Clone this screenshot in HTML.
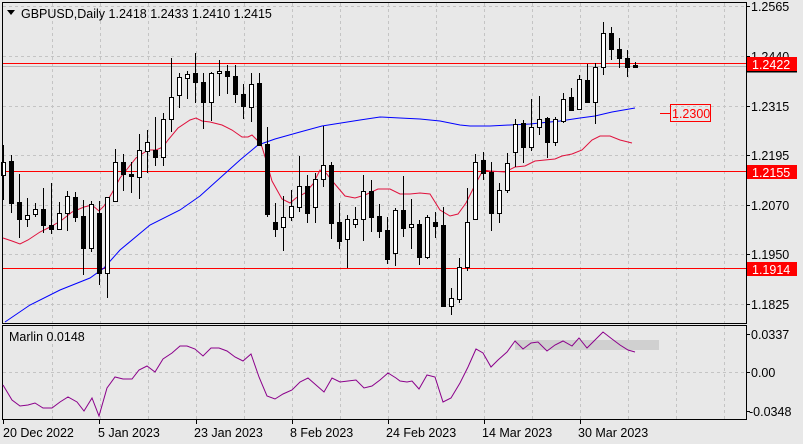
<!DOCTYPE html>
<html><head><meta charset="utf-8"><style>
html,body{margin:0;padding:0;background:#e8e8e8;}
svg{display:block;font-family:"Liberation Sans",sans-serif;}
</style></head><body>
<svg width="803" height="444" viewBox="0 0 803 444" xmlns="http://www.w3.org/2000/svg">
<rect width="803" height="444" fill="#e8e8e8"/>
<g stroke="#c4c4c4" stroke-width="1" stroke-dasharray="3,3" fill="none">
<path d="M52.5 3V323M100.5 3V323M148.5 3V323M196.5 3V323M244.5 3V323M292.5 3V323M340.5 3V323M388.5 3V323M436.5 3V323M484.5 3V323M532.5 3V323M580.5 3V323M628.5 3V323M676.5 3V323M724.5 3V323"/>
<path d="M3 6.5H746M3 56.5H746M3 106.5H746M3 155.5H746M3 205.5H746M3 254.5H746M3 304.5H746"/>
<path d="M52.5 326V419M100.5 326V419M148.5 326V419M196.5 326V419M244.5 326V419M292.5 326V419M340.5 326V419M388.5 326V419M436.5 326V419M484.5 326V419M532.5 326V419M580.5 326V419M628.5 326V419M676.5 326V419M724.5 326V419"/>
<path d="M3 372.5H746"/>
</g>
<line x1="3" y1="66.5" x2="746" y2="66.5" stroke="#b8b8b8"/>
<g stroke="#ff0000" stroke-width="1">
<line x1="3" y1="63.5" x2="746" y2="63.5"/>
<line x1="3" y1="171.5" x2="746" y2="171.5"/>
<line x1="3" y1="268.5" x2="746" y2="268.5"/>
</g>
<polyline fill="none" stroke="#0000ff" stroke-width="1" points="5,322 30,305 60,290 90,278 104,268 120,250 150,225 180,210 200,196 220,178 240,160 258,145 275,139 300,132 322,126 360,120 380,117 400,118 420,119 440,121 460,125 470,126 490,126 510,125 530,124 560,121 580,118 595,116 612,112 635,108"/>
<polyline fill="none" stroke="#e0103c" stroke-width="1" points="3,238 12,241 20,244 28,240 40,232 52,226 62,220 72,212 84,207 92,205 99,211 104,206 112,193 120,178 128,168 136,158 148,150 156,150 163,147 168,140 178,128 190,120 196,118 202,121 210,122 222,125 232,130 242,137 248,137 252,135 258,141 262,147 266,160 272,181 282,199 290,203 296,198 305,193 313,184 320,170 326,173 334,183 345,196 355,198 365,195 378,189 390,189 400,194 410,194 420,193 430,194 440,210 450,216 458,214 466,203 475,185 483,170 490,171 505,172 515,167 525,166 535,161 545,160 555,159 562,156 572,154 582,150 592,140 600,136 610,136 620,140 632,143"/>
<path stroke="#000" stroke-width="1" fill="none" d="M3.5 145V200M11.5 155V213M19.5 174V238M27.5 198V227M35.5 203V217M43.5 188V233M51.5 183V234M59.5 202V230M67.5 191V231M75.5 192V222M83.5 200V275M91.5 201V252M99.5 201V285M107.5 197V298M115.5 149V201M123.5 154V191M131.5 162V193M139.5 134V199M147.5 130V173M155.5 117V166M163.5 113V166M171.5 58V132M179.5 73V108M187.5 71V99M195.5 53V103M203.5 73V129M211.5 72V121M219.5 60V96M227.5 65V94M235.5 65V103M243.5 84V119M251.5 73V122M259.5 73V145M267.5 127V217M275.5 203V237M283.5 196V251M291.5 190V221M299.5 156V212M307.5 175V223M315.5 173V223M323.5 126V187M331.5 162V239M339.5 203V249M347.5 215V268M355.5 207V228M363.5 175V241M371.5 180V232M379.5 204V238M387.5 217V264M395.5 208V266M403.5 176V237M411.5 199V249M419.5 220V265M427.5 215V259M435.5 212V238M443.5 207V307M451.5 288V315M459.5 258V303M467.5 188V271M475.5 154V219M483.5 152V180M491.5 162V231M499.5 183V223M507.5 153V193M515.5 119V167M523.5 120V163M531.5 99V151M539.5 96V135M547.5 117V158M555.5 117V146M563.5 93V123M571.5 88V111M579.5 75V109M587.5 64V102M595.5 63V124M603.5 22V75M611.5 27V60M619.5 38V68M627.5 50V77M635.5 62V68"/>
<g fill="#fff" stroke="#000" stroke-width="1" transform="translate(0.5,0.5)">
<rect x="1" y="162" width="4" height="13"/><rect x="25" y="215" width="4" height="4"/><rect x="33" y="209" width="4" height="5"/><rect x="57" y="213" width="4" height="16"/><rect x="65" y="196" width="4" height="17"/><rect x="89" y="204" width="4" height="44"/><rect x="105" y="197" width="4" height="76"/><rect x="113" y="162" width="4" height="39"/><rect x="137" y="150" width="4" height="27"/><rect x="145" y="142" width="4" height="9"/><rect x="161" y="119" width="4" height="38"/><rect x="169" y="97" width="4" height="22"/><rect x="177" y="77" width="4" height="18"/><rect x="185" y="74" width="4" height="4"/><rect x="209" y="73" width="4" height="29"/><rect x="217" y="71" width="4" height="2"/><rect x="249" y="84" width="4" height="23"/><rect x="281" y="217" width="4" height="10"/><rect x="289" y="206" width="4" height="11"/><rect x="297" y="186" width="4" height="21"/><rect x="313" y="179" width="4" height="28"/><rect x="321" y="165" width="4" height="14"/><rect x="345" y="219" width="4" height="20"/><rect x="353" y="219" width="4" height="5"/><rect x="361" y="191" width="4" height="28"/><rect x="393" y="210" width="4" height="43"/><rect x="409" y="224" width="4" height="3"/><rect x="425" y="217" width="4" height="40"/><rect x="449" y="298" width="4" height="8"/><rect x="457" y="267" width="4" height="32"/><rect x="465" y="222" width="4" height="45"/><rect x="473" y="162" width="4" height="57"/><rect x="497" y="190" width="4" height="23"/><rect x="505" y="163" width="4" height="27"/><rect x="513" y="124" width="4" height="28"/><rect x="529" y="127" width="4" height="20"/><rect x="537" y="119" width="4" height="8"/><rect x="553" y="119" width="4" height="23"/><rect x="561" y="99" width="4" height="22"/><rect x="577" y="79" width="4" height="30"/><rect x="593" y="67" width="4" height="35"/><rect x="601" y="33" width="4" height="34"/>
</g>
<g fill="#000" stroke="#000" stroke-width="1" transform="translate(0.5,0.5)">
<rect x="9" y="161" width="4" height="42"/><rect x="17" y="202" width="4" height="17"/><rect x="41" y="209" width="4" height="16"/><rect x="49" y="225" width="4" height="4"/><rect x="73" y="197" width="4" height="20"/><rect x="81" y="216" width="4" height="32"/><rect x="97" y="213" width="4" height="60"/><rect x="121" y="162" width="4" height="12"/><rect x="129" y="174" width="4" height="2"/><rect x="153" y="150" width="4" height="7"/><rect x="193" y="73" width="4" height="9"/><rect x="201" y="82" width="4" height="20"/><rect x="225" y="71" width="4" height="5"/><rect x="233" y="76" width="4" height="18"/><rect x="241" y="94" width="4" height="12"/><rect x="257" y="83" width="4" height="62"/><rect x="265" y="144" width="4" height="70"/><rect x="273" y="222" width="4" height="7"/><rect x="305" y="186" width="4" height="27"/><rect x="329" y="165" width="4" height="58"/><rect x="337" y="222" width="4" height="19"/><rect x="369" y="191" width="4" height="26"/><rect x="377" y="216" width="4" height="15"/><rect x="385" y="230" width="4" height="29"/><rect x="401" y="210" width="4" height="18"/><rect x="417" y="224" width="4" height="33"/><rect x="433" y="222" width="4" height="4"/><rect x="441" y="225" width="4" height="81"/><rect x="481" y="160" width="4" height="13"/><rect x="489" y="172" width="4" height="41"/><rect x="521" y="123" width="4" height="24"/><rect x="545" y="118" width="4" height="24"/><rect x="569" y="97" width="4" height="13"/><rect x="585" y="80" width="4" height="22"/><rect x="609" y="33" width="4" height="16"/><rect x="617" y="49" width="4" height="9"/><rect x="625" y="58" width="4" height="9"/><rect x="633" y="65" width="4" height="2"/>
</g>
<line x1="660" y1="113.5" x2="670" y2="113.5" stroke="#ff0000"/>
<rect x="670.5" y="104.5" width="40" height="17" fill="none" stroke="#ff0000"/>
<text x="672" y="118" font-size="12.5" fill="#ff0000">1.2300</text>
<rect x="2.5" y="2.5" width="744" height="321" fill="none" stroke="#000"/>
<rect x="2.5" y="325.5" width="744" height="94" fill="none" stroke="#000"/>
<rect x="515" y="340" width="144" height="10" fill="#d0d0d0"/>
<polyline fill="none" stroke="#8b008b" stroke-width="1" points="3,385 12,400 20,406 28,405 35,403 43,408 52,408 60,402 68,397 77,402 84,411 92,398 99,416 107,388 115,377 123,379 132,379 139,370 147,366 155,372 163,359 172,353 180,346 187,346 195,349 203,356 211,348 219,348 227,351 235,357 243,361 251,354 259,377 267,396 275,399 283,394 292,390 300,382 308,378 316,385 324,392 332,378 340,382 348,381 356,380 364,388 372,386 380,380 388,373 396,378 400,381 407,382 412,381 419,389 427,375 435,377 443,402 451,398 460,383 468,367 476,349 483,353 491,367 498,360 507,352 515,341 523,349 531,343 538,342 547,351 555,345 563,341 572,346 579,338 587,348 595,340 603,332 612,339 620,345 628,350 635,352"/>
<text x="9" y="341" font-size="12.5" fill="#000">Marlin 0.0148</text>
<path stroke="#000" d="M746 6.5H750M746 56.5H750M746 106.5H750M746 155.5H750M746 205.5H750M746 254.5H750M746 304.5H750M746 334.5H750M746 372.5H750M746 411.5H750M3.5 420V424M99.5 420V424M196.5 420V424M292.5 420V424M388.5 420V424M484.5 420V424M580.5 420V424"/>
<g font-size="12.5" fill="#000">
<text x="751" y="11">1.2565</text>
<text x="751" y="61">1.2440</text>
<text x="751" y="111">1.2315</text>
<text x="751" y="160">1.2195</text>
<text x="751" y="210">1.2070</text>
<text x="751" y="259">1.1950</text>
<text x="751" y="309">1.1825</text>
<text x="751" y="339">0.0337</text>
<text x="751" y="377">0.00</text>
<text x="749" y="416">-0.0348</text>
<text x="3" y="437">20 Dec 2022</text>
<text x="98" y="437">5 Jan 2023</text>
<text x="194" y="437">23 Jan 2023</text>
<text x="290" y="437">8 Feb 2023</text>
<text x="386" y="437">24 Feb 2023</text>
<text x="482" y="437">14 Mar 2023</text>
<text x="578" y="437">30 Mar 2023</text>
</g>
<rect x="747" y="57" width="50" height="14" fill="#ff0000"/>
<rect x="747" y="71" width="50" height="1.5" fill="#000"/>
<text x="752" y="69" font-size="12.5" fill="#fff">1.2422</text>
<rect x="747" y="165" width="50" height="14" fill="#ff0000"/>
<text x="752" y="177" font-size="12.5" fill="#fff">1.2155</text>
<rect x="747" y="262" width="50" height="14" fill="#ff0000"/>
<text x="752" y="274" font-size="12.5" fill="#fff">1.1914</text>
<path d="M7 10H15L11 15Z" fill="#000"/>
<text x="21" y="18" font-size="12.5" fill="#000">GBPUSD,Daily  1.2418 1.2433 1.2410 1.2415</text>
</svg>
</body></html>
